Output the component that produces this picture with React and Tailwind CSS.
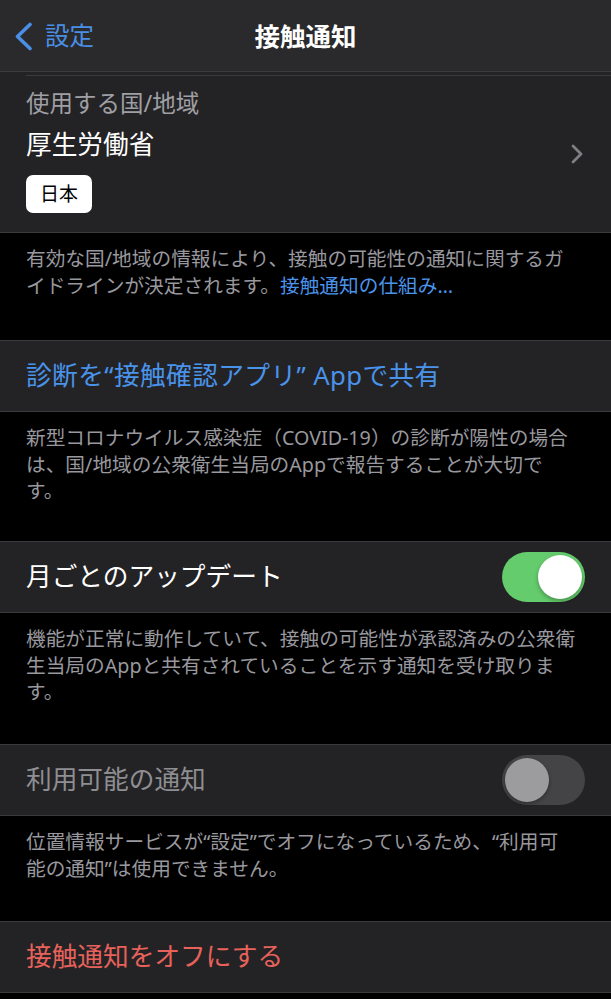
const font = { fontFamily: '"Noto Sans", "Noto Sans CJK JP", sans-serif' };

const Toggle = ({ on }) => (
    <div
        className={
            on
                ? "w-[83px] h-[50px] rounded-full bg-[#64cc6c] p-[3px] flex justify-end shrink-0"
                : "w-[83px] h-[50px] rounded-full bg-[#444447] p-[3px] flex justify-start shrink-0"
        }
    >
        <div
            className={
                on
                    ? "w-[44px] h-[44px] rounded-full bg-white shadow-[0_2px_4px_rgba(0,0,0,0.3)]"
                    : "w-[44px] h-[44px] rounded-full bg-[#9c9c9f] shadow-[0_2px_4px_rgba(0,0,0,0.3)]"
            }
        />
    </div>
);

const Footer = ({ h, children }) => (
    <div className={`${h} px-[26px] pt-[13px] text-[19.7px] leading-[26.5px] text-[#98989e]`}>{children}</div>
);

export default function App() {
    return (
        <div className="min-h-screen bg-black" style={font}>
            {/* nav bar */}
            <div className="h-[72px] bg-[#2a2a2c] border-b border-[#3b3b3d] grid grid-cols-[1fr_auto_1fr] items-center pt-[2px]">
                <div className="flex items-center pl-[14px] gap-[12px] text-[#4a8fe6]">
                    <svg width="19" height="29" viewBox="0 0 19 29" fill="none">
                        <path d="M16 2.5 L3.5 14.5 L16 26.5" stroke="#4a8fe6" strokeWidth="3.6" strokeLinecap="round" strokeLinejoin="round" />
                    </svg>
                    <span className="text-[24.5px] leading-none">設定</span>
                </div>
                <div className="text-[25.5px] font-bold text-white leading-none">接触通知</div>
                <div />
            </div>

            {/* country / region */}
            <div className="h-[161px] bg-[#232325] border-b border-[#3a3a3c] pt-[3px] flex flex-col">
                <div className="ml-[26px] h-px bg-[#3a3a3c]" />
                <div className="flex-1 flex items-center justify-between pl-[26px] pr-[28px]">
                    <div className="flex flex-col self-start">
                        <div className="mt-[12px] text-[23.5px] leading-[30px] text-[#9f9fa4]">使用する国/地域</div>
                        <div className="mt-[11px] text-[25.7px] leading-[32px] text-white">厚生労働省</div>
                        <div className="mt-[14px] w-[66px] h-[38px] rounded-[7px] bg-white text-black text-[19px] flex items-center justify-center">
                            日本
                        </div>
                    </div>
                    <svg width="12" height="20" viewBox="0 0 12 20" fill="none">
                        <path d="M2 2 L10 10 L2 18" stroke="#7e7e83" strokeWidth="2.8" strokeLinecap="round" strokeLinejoin="round" />
                    </svg>
                </div>
            </div>
            <Footer h="h-[107px]">
                有効な国/地域の情報により、接触の可能性の通知に関するガ
                <br />
                イドラインが決定されます。<span className="text-[#4a93ea]">接触通知の仕組み…</span>
            </Footer>

            {/* share diagnosis */}
            <div className="h-[72px] bg-[#232325] border-y border-[#3a3a3c] flex items-center px-[26px]">
                <span className="text-[25.7px] tracking-[0.4px] text-[#4a93ea] leading-none">診断を“接触確認アプリ” Appで共有</span>
            </div>
            <Footer h="h-[129px]">
                新型コロナウイルス感染症（COVID-19）の診断が陽性の場合
                <br />
                は、国/地域の公衆衛生当局のAppで報告することが大切で
                <br />
                す。
            </Footer>

            {/* monthly update */}
            <div className="h-[72px] bg-[#232325] border-y border-[#3a3a3c] flex items-center justify-between pl-[26px] pr-[26px]">
                <span className="text-[25.7px] text-white leading-none">月ごとのアップデート</span>
                <Toggle on />
            </div>
            <Footer h="h-[131px]">
                機能が正常に動作していて、接触の可能性が承認済みの公衆衛
                <br />
                生当局のAppと共有されていることを示す通知を受け取りま
                <br />
                す。
            </Footer>

            {/* availability notification */}
            <div className="h-[72px] bg-[#232325] border-y border-[#3a3a3c] flex items-center justify-between pl-[26px] pr-[26px]">
                <span className="text-[25.7px] text-[#8e8e93] leading-none">利用可能の通知</span>
                <Toggle on={false} />
            </div>
            <Footer h="h-[105px]">
                位置情報サービスが“設定”でオフになっているため、“利用可
                <br />
                能の通知”は使用できません。
            </Footer>

            {/* turn off */}
            <div className="h-[72px] bg-[#232325] border-y border-[#3a3a3c] flex items-center px-[26px]">
                <span className="text-[25.7px] text-[#e8625b] leading-none">接触通知をオフにする</span>
            </div>
        </div>
    );
}
